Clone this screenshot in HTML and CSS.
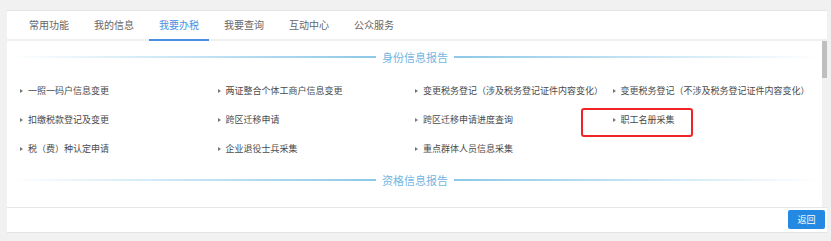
FILE: index.html
```html
<!DOCTYPE html>
<html lang="zh-CN">
<head>
  <meta charset="UTF-8" />
  <title>我要办税</title>
  <link rel="stylesheet" href="styles.css">
</head>
<body>
  <div class="card">
    <!-- Tabs -->
    <ul class="tabs">
      <li>常用功能</li>
      <li>我的信息</li>
      <li class="active">我要办税</li>
      <li>我要查询</li>
      <li>互动中心</li>
      <li>公众服务</li>
    </ul>

    <!-- Content -->
    <div class="body">
      <div class="content">
        <div class="section">
          <div class="section-title"><span class="line left"></span><span class="title-text">身份信息报告</span><span class="line right"></span></div>
          <ul class="items">
            <li>一照一码户信息变更</li>
            <li>两证整合个体工商户信息变更</li>
            <li>变更税务登记（涉及税务登记证件内容变化）</li>
            <li>变更税务登记（不涉及税务登记证件内容变化）</li>
            <li>扣缴税款登记及变更</li>
            <li>跨区迁移申请</li>
            <li>跨区迁移申请进度查询</li>
            <li class="marked">职工名册采集</li>
            <li>税（费）种认定申请</li>
            <li>企业退役士兵采集</li>
            <li>重点群体人员信息采集</li>
          </ul>
        </div>

        <div class="section">
          <div class="section-title"><span class="line left"></span><span class="title-text">资格信息报告</span><span class="line right"></span></div>
        </div>
      </div>
      <div class="scrollbar"><div class="thumb"></div></div>
    </div>

    <!-- Footer -->
    <div class="footer">
      <button class="btn">返回</button>
    </div>
  </div>
</body>
</html>
```

FILE: styles.css
```css
/* Page */
body {
  margin: 10px 4px 8px 7px;
  background: #f1f1f1;
  font-family: "Noto Sans CJK SC", "Noto Sans", sans-serif;
}
ul {
  list-style: none;
  margin: 0;
  padding: 0;
}

/* Card */
.card {
  background: #fff;
  border-top: 1px solid #e4e4e4;
  border-bottom: 1px solid #e4e4e4;
  box-shadow: 0 0 2px rgba(0, 0, 0, 0.08);
}

/* Tabs */
.tabs {
  display: flex;
  height: 28px;
  padding-left: 12px;
  border-bottom: 2px solid #f0f0f0;
}
.tabs li {
  width: 60px;
  margin-right: 5px;
  text-align: center;
  font-size: 10px;
  line-height: 28px;
  color: #666;
  border-bottom: 2px solid transparent;
  margin-bottom: -2px;
}
.tabs li.active {
  color: #4a90e2;
  border-bottom-color: #4a90e2;
}

/* Content with scrollbar */
.body {
  display: flex;
  height: 166px;
  overflow: hidden;
}
.content {
  flex: 1;
}
.scrollbar {
  width: 5px;
  background: #f1f1f1;
}
.thumb {
  height: 37px;
  background: #bfbfbf;
}

/* Section title */
.section-title {
  display: flex;
  align-items: center;
  height: 20px;
  margin-top: 6px;
  padding: 0 2px 0 3px;
}
.title-text {
  font-size: 11px;
  color: #72b6e2;
  margin: 0 6px;
}
.line {
  flex: 1;
  height: 2px;
}
.line.left {
  background: linear-gradient(to right, rgba(140, 200, 232, 0), #8cc8e8);
}
.line.right {
  background: linear-gradient(to right, #8cc8e8, rgba(140, 200, 232, 0));
}

/* Items */
.items {
  display: grid;
  grid-template-columns: repeat(4, 197.5px);
  grid-auto-rows: 29px;
  padding: 9px 0 1px 12px;
}
.items li {
  position: relative;
  display: flex;
  align-items: center;
  font-size: 9px;
  color: #4a4a4a;
  white-space: nowrap;
}
.items li::before {
  content: "";
  width: 0;
  height: 0;
  margin: 0 5px 0 1px;
  border-left: 3px solid #777;
  border-top: 2.5px solid transparent;
  border-bottom: 2.5px solid transparent;
}

/* Highlight box around an item */
.items li.marked::after {
  content: "";
  position: absolute;
  left: -31px;
  top: 3px;
  width: 108px;
  height: 25px;
  border: 2px solid #f02424;
  border-radius: 3px;
}

/* Footer */
.footer {
  display: flex;
  justify-content: flex-end;
  padding: 2px 2px 3px;
  border-top: 1px solid #e6e6e6;
}
.btn {
  width: 37px;
  height: 19px;
  padding: 0;
  border: none;
  border-radius: 2px;
  background: #2489e3;
  color: #fff;
  font-family: inherit;
  font-size: 9px;
}
```
